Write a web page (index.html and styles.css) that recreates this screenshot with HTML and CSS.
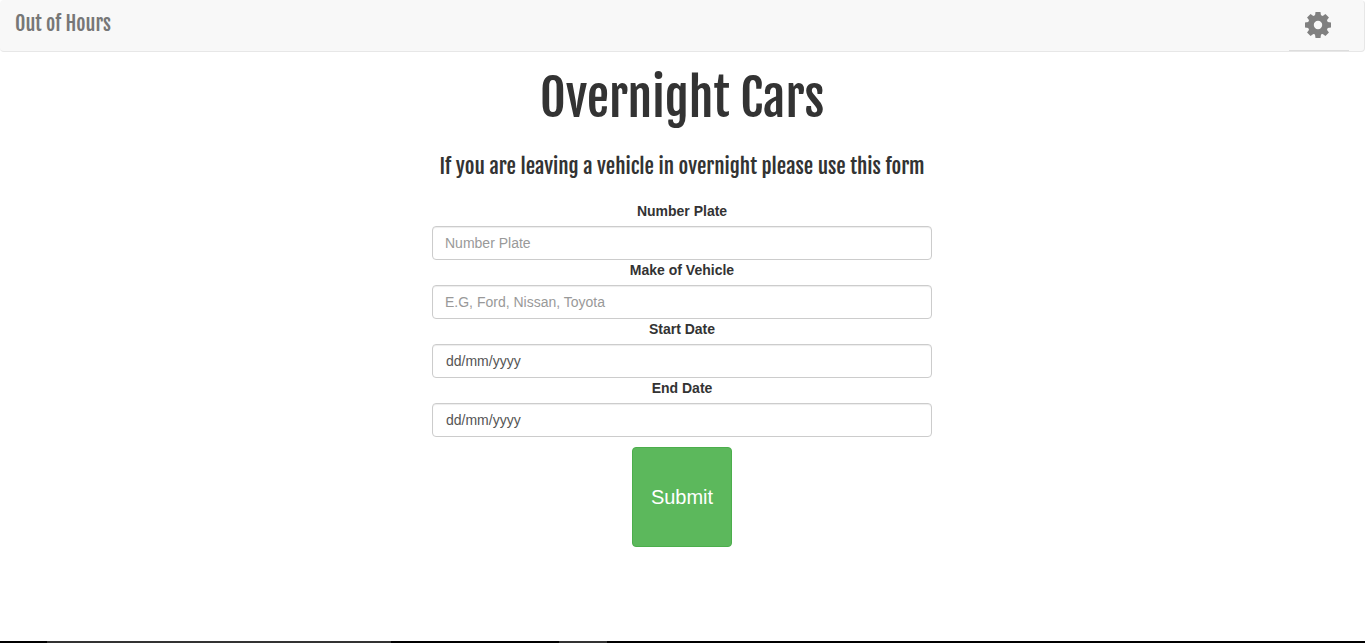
FILE: index.html
```
<!DOCTYPE html>
<html lang="en-GB">
<head>
<meta charset="utf-8">
<title>Out of Hours</title>
<link rel="stylesheet" href="styles.css">
</head>
<body>
<nav class="navbar">
  <a class="brand" href="#">Out of Hours</a>
  <button class="settings" type="button" aria-label="Settings">
    <svg class="gear" viewBox="-13 -13 26 26" aria-hidden="true">
      <defs><path id="tooth" d="M-3.2 -8L-2.5 -13H2.5L3.2 -8Z"/></defs>
      <circle r="7.2" fill="none" stroke="currentColor" stroke-width="6"/>
      <g fill="currentColor">
        <use href="#tooth"/>
        <use href="#tooth" transform="rotate(45)"/>
        <use href="#tooth" transform="rotate(90)"/>
        <use href="#tooth" transform="rotate(135)"/>
        <use href="#tooth" transform="rotate(180)"/>
        <use href="#tooth" transform="rotate(225)"/>
        <use href="#tooth" transform="rotate(270)"/>
        <use href="#tooth" transform="rotate(315)"/>
      </g>
    </svg>
  </button>
</nav>
<main class="content">
  <h1 class="title">Overnight Cars</h1>
  <h2 class="subtitle">If you are leaving a vehicle in overnight please use this form</h2>
  <form class="form">
    <label class="label" for="plate">Number Plate</label>
    <input class="field" id="plate" type="text" placeholder="Number Plate">
    <label class="label" for="make">Make of Vehicle</label>
    <input class="field" id="make" type="text" placeholder="E.G, Ford, Nissan, Toyota">
    <label class="label" for="start">Start Date</label>
    <input class="field date" id="start" type="text" placeholder="dd/mm/yyyy">
    <label class="label" for="end">End Date</label>
    <input class="field date" id="end" type="text" placeholder="dd/mm/yyyy">
    <button class="submit" type="submit">Submit</button>
  </form>
</main>
<footer class="strip"></footer>
</body>
</html>
```
FILE: styles.css
```
* { box-sizing: border-box; }

body {
  margin: 0;
  min-height: 100vh;
  display: flex;
  flex-direction: column;
  background: #fff;
  color: #333;
  font: 14px/20px "Liberation Sans", Arial, sans-serif;
}

.navbar {
  display: flex;
  justify-content: space-between;
  height: 52px;
  padding: 0 15px;
  background: #f8f8f8;
  border: 1px solid #e7e7e7;
  border-top-color: #f8f8f8;
  border-left: 0;
  border-radius: 4px;
}

.brand, .title, .subtitle {
  font-family: "Fjalla One", "Liberation Sans", sans-serif;
  font-weight: 400;
}

.brand {
  padding-top: 13px;
  color: #777;
  font-size: 20px;
  line-height: 20px;
  text-decoration: none;
}

.settings {
  display: flex;
  justify-content: center;
  width: 60px;
  height: 50px;
  padding: 11px 2px 0 0;
  border: 0;
  border-bottom: 1px solid #ddd;
  background: none;
  color: #808080;
}

.gear { width: 26px; height: 26px; }

.content {
  flex: 1;
  padding: 0 16px 0 15px;
  text-align: center;
}

.title {
  margin: 16px 0 0;
  font-size: 50px;
  line-height: 60px;
}

.subtitle {
  margin: 25px 0 0;
  font-size: 21px;
  line-height: 26px;
}

.form {
  display: flex;
  flex-direction: column;
  align-items: center;
  max-width: 500px;
  margin: 22px auto 0;
}

.label {
  margin-bottom: 5px;
  font-weight: 700;
}

.field {
  width: 100%;
  height: 34px;
  padding: 6px 12px;
  border: 1px solid #ccc;
  border-radius: 4px;
  background: #fff;
  box-shadow: inset 0 1px 1px rgba(0, 0, 0, .075);
  color: #555;
  font: inherit;
}

.field::placeholder { color: #999; opacity: 1; }
.date { padding-left: 13px; }
.date::placeholder { color: #555; }

.submit {
  width: 100px;
  height: 100px;
  margin-top: 10px;
  padding: 0;
  border: 1px solid #4cae4c;
  border-radius: 4px;
  background: #5cb85c;
  color: #fff;
  font: 20px/28px "Liberation Sans", Arial, sans-serif;
}

.strip {
  height: 2px;
  background: linear-gradient(to right, #000 47px, #333 47px 391px, #000 391px 559px, #333 559px 607px, #000 607px);
}
```
